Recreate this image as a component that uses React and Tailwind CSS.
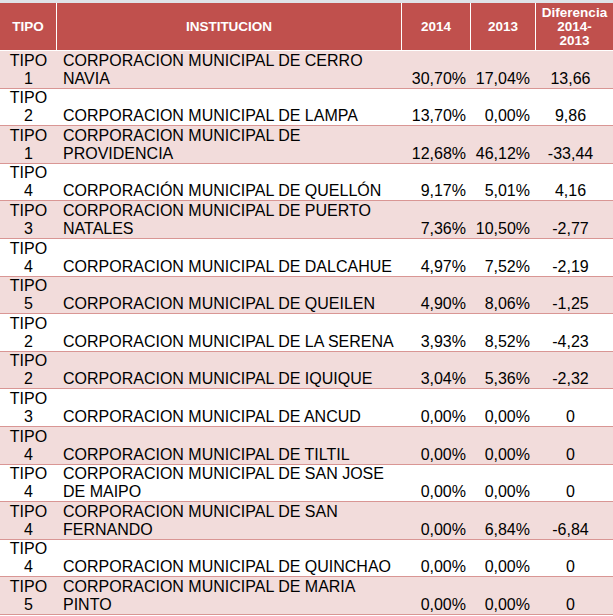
const rows = [
  ["1", "CORPORACION MUNICIPAL DE CERRO", "NAVIA", "30,70%", "17,04%", "13,66"],
  ["2", "", "CORPORACION MUNICIPAL DE LAMPA", "13,70%", "0,00%", "9,86"],
  ["1", "CORPORACION MUNICIPAL DE", "PROVIDENCIA", "12,68%", "46,12%", "-33,44"],
  ["4", "", "CORPORACIÓN MUNICIPAL DE QUELLÓN", "9,17%", "5,01%", "4,16"],
  ["3", "CORPORACION MUNICIPAL DE PUERTO", "NATALES", "7,36%", "10,50%", "-2,77"],
  ["4", "", "CORPORACION MUNICIPAL DE DALCAHUE", "4,97%", "7,52%", "-2,19"],
  ["5", "", "CORPORACION MUNICIPAL DE QUEILEN", "4,90%", "8,06%", "-1,25"],
  ["2", "", "CORPORACION MUNICIPAL DE LA SERENA", "3,93%", "8,52%", "-4,23"],
  ["2", "", "CORPORACION MUNICIPAL DE IQUIQUE", "3,04%", "5,36%", "-2,32"],
  ["3", "", "CORPORACION MUNICIPAL DE ANCUD", "0,00%", "0,00%", "0"],
  ["4", "", "CORPORACION MUNICIPAL DE TILTIL", "0,00%", "0,00%", "0"],
  ["4", "CORPORACION MUNICIPAL DE SAN JOSE", "DE MAIPO", "0,00%", "0,00%", "0"],
  ["4", "CORPORACION MUNICIPAL DE SAN", "FERNANDO", "0,00%", "6,84%", "-6,84"],
  ["4", "", "CORPORACION MUNICIPAL DE QUINCHAO", "0,00%", "0,00%", "0"],
  ["5", "CORPORACION MUNICIPAL DE MARIA", "PINTO", "0,00%", "0,00%", "0"],
];

function Row({ r, i }) {
  const bg = i % 2 === 0 ? "bg-[#f2dcdb]" : "bg-white";
  return (
    <div className={`flex h-[37.6px] border-b border-[#d99694] ${bg} text-[16px] leading-[18px] text-black`}>
      <div className="w-[57px] flex flex-col items-center justify-end">
        <span>TIPO</span>
        <span>{r[0]}</span>
      </div>
      <div className="w-[345px] pl-[6px] flex flex-col justify-end whitespace-nowrap">
        {r[1] && <span>{r[1]}</span>}
        <span>{r[2]}</span>
      </div>
      <div className="w-[69px] pr-[5px] flex items-end justify-end">{r[3]}</div>
      <div className="w-[65px] pr-[6px] flex items-end justify-end">{r[4]}</div>
      <div className="flex-1 flex items-end justify-center pr-[8px]">{r[5]}</div>
    </div>
  );
}

export default function App() {
  return (
    <div className="w-[613px] h-[616px] bg-white overflow-hidden" style={{ fontFamily: '"Liberation Sans", Arial, sans-serif' }}>
      <div className="h-[3px] bg-[#dfe3e8]" />
      <div className="flex h-[48px] bg-[#c0504d] text-white font-bold text-[13.5px] leading-[14px] border-b border-white">
        <div className="w-[57px] border-r border-white flex items-center justify-center">TIPO</div>
        <div className="w-[345px] border-r border-white flex items-center justify-center">INSTITUCION</div>
        <div className="w-[69px] border-r border-white flex items-center justify-center">2014</div>
        <div className="w-[65px] border-r border-white flex items-center justify-center">2013</div>
        <div className="flex-1 flex flex-col items-center justify-center text-center">
          <span>Diferencia</span>
          <span>2014-</span>
          <span>2013</span>
        </div>
      </div>
      {rows.map((r, i) => (
        <Row key={i} r={r} i={i} />
      ))}
    </div>
  );
}
